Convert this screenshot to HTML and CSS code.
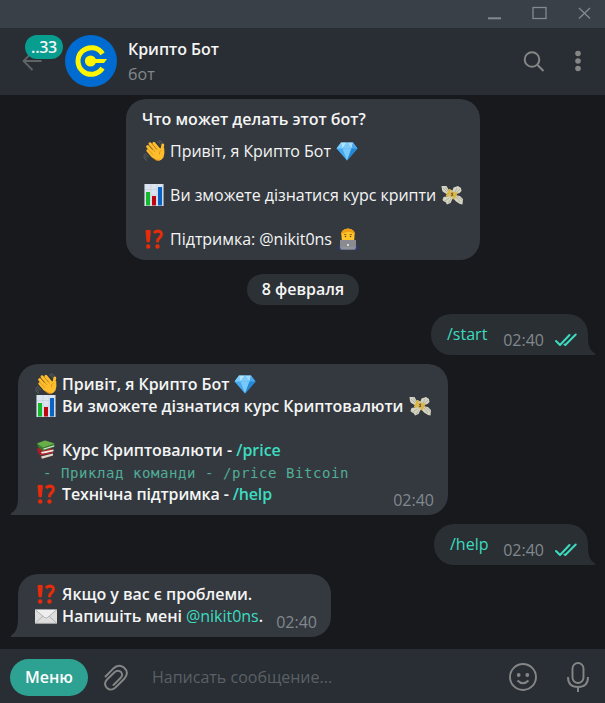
FILE: index.html
```html
<!DOCTYPE html>
<html lang="ru">
<head>
<meta charset="utf-8">
<title>Крипто Бот</title>
<link rel="stylesheet" href="styles.css">
</head>
<body>
<svg class="sprite" aria-hidden="true">
  <symbol id="wave" viewBox="0 0 22 22">
    <path d="M4.800 10.500L10 16.500M4.600 6.500L11 14M7 3.700L13 11M10.800 3.300L16 9.500M19.800 5L18.500 12" fill="none" stroke="#fdbd2d" stroke-width="2.900" stroke-linecap="round"/>
    <path d="M9 10L17 8.500L21.200 8Q22 14 20.500 17.500Q17.500 22 13 20Q10 18.500 7.500 14.500Z" fill="#fdbd2d"/>
    <path d="M4.500 8.700L10 14.800M6 5L12 12M9.200 4L14.500 10.200" fill="none" stroke="#d08719" stroke-width=".7"/>
    <path d="M18.300 10Q15.800 11.500 16.500 14.500M9.500 17.500Q12.500 21 17 20.300" fill="none" stroke="#e58e18" stroke-width=".9"/>
    <path d="M14 1.500Q17 1.800 17.500 4.800M15.800 .5Q18.500 1 19.200 3M1 14Q1.500 17 4 18.500M.5 16.500Q1.500 19.500 4 20.500M2.500 13Q3.500 16 6 17" fill="none" stroke="#62666a" stroke-width=".8"/>
  </symbol>
  <symbol id="gem" viewBox="0 0 22 22">
    <path d="M5 2.500H17L21.500 8.500L11 20.500L.5 8.500Z" fill="#46a9ef"/>
    <path d="M5 2.500L6.500 8.500H.5Z" fill="#7dcdfa"/><path d="M5 2.500H11L6.500 8.500Z" fill="#b1e4ff"/>
    <path d="M11 2.500L15.500 8.500H6.500Z" fill="#7acbfa"/><path d="M11 2.500H17L15.500 8.500Z" fill="#a0dcfe"/>
    <path d="M17 2.500L21.500 8.500H15.500Z" fill="#4ca8ea"/><path d="M6.500 8.500H15.500L11 20.500Z" fill="#79c9fb"/>
    <path d="M15.500 8.500H21.500L11 20.500Z" fill="#2488d6"/>
  </symbol>
  <symbol id="chart" viewBox="0 0 22 22">
    <path d="M1.500 0H20.500V22H1.500Z" fill="#dce5ef"/>
    <path d="M2 5.500H20M2 11H20M2 16.500H20M8 0V22M14 0V22" stroke="#c3cfde" stroke-width=".6"/>
    <path d="M1.500 0V22M20.300 0V22" stroke="#8f9caa" stroke-width=".7"/>
    <path d="M3 8H7V21.500H3Z" fill="#15b72b"/><path d="M9 12H13V21.500H9Z" fill="#bd0710"/><path d="M15 3H19V21.500H15Z" fill="#0863c5"/>
  </symbol>
  <symbol id="alarm" viewBox="0 0 22 22">
    <path d="M2.500 2.500Q5.200 1 7.900 2.500L6.900 13.500Q5.200 15.500 3.500 13.500Z" fill="#e52d0b"/>
    <circle cx="5.200" cy="18.500" r="2.200" fill="#e52d0b"/>
    <path d="M11 5Q12.500 3 15.200 3.100Q18.600 3.300 18.400 6.300Q18.200 8.500 16.300 10Q14.500 11.200 14.500 14.300" fill="none" stroke="#e52d0b" stroke-width="3.100"/>
    <circle cx="14.500" cy="18.500" r="2.200" fill="#e52d0b"/>
  </symbol>
  <symbol id="money" viewBox="0 0 22 22">
    <path d="M9 8L5.500 2L.5 2L.8 4.500Q1 8 4 9L7 11ZM11 8L12.500 3.500L17 2L20 4L20.500 7L18.500 9L14 10.500ZM8 12L2.500 13L1.500 16L3 17.500L4.500 18L6 20.500L9.500 19L12 14ZM14 11L19 12L22 15L21.500 20.500L19 20L15 17.500L12 14Z" fill="#d5d3c1"/>
    <path d="M2 4L6 8M4 3L7 7M16 4L14 8M19 5L15 9M4 17L8 14M7 19L10 15M19 18L15 13M21 16L16 12" stroke="#9c9986" stroke-width=".6"/>
    <path d="M8 5L16.500 8.500L13.500 15.500L5 12Z" fill="#cfc69b"/>
    <path d="M8 5L10 5.800L7 12.800L5 12ZM14.500 7.700L16.500 8.500L13.500 15.500L11.500 14.700Z" fill="#dfb43c"/>
    <ellipse cx="11" cy="10.300" rx="2.800" ry="2.500" fill="#dab651"/><path d="M12.300 9L10.500 9.400L11.900 11.300L10 11.800" fill="none" stroke="#59451b" stroke-width=".9"/>
  </symbol>
  <symbol id="coder" viewBox="0 0 22 22">
    <path d="M2 21.500Q2 15 7 14H15Q20 15 20 21.500Z" fill="#2a40b8"/>
    <path d="M4.500 9Q3.500 1 11 .5Q18.500 1 17.500 9L17 13H5Z" fill="#ffc52b"/>
    <path d="M4 8Q3 1 11 .5Q19 1 18 8L17 5.500Q14 3.500 10 4L5.500 5.500Z" fill="#eea014"/>
    <path d="M7 6.500H9.500M12.500 6.500H15" stroke="#855116" stroke-width=".8"/><circle cx="8.500" cy="8.500" r=".8" fill="#62400f"/><circle cx="13.500" cy="8.500" r=".8" fill="#62400f"/>
    <path d="M3 12H19V19L18 21.700H4L3 19Z" fill="#898b90"/><path d="M4 20H18" stroke="#9fa1a5" stroke-width=".8"/><circle cx="11" cy="17" r=".9" fill="#fff"/>
  </symbol>
  <symbol id="books" viewBox="0 0 22 22">
    <path d="M3 14L16 12L19 17L7 20.500L4 18.500Z" fill="#4b3833"/><path d="M6 17.500L18 14.500V16.500L7 19.700Z" fill="#ded9d1"/>
    <path d="M2 9L15 8L19 12L7 16L3 14Z" fill="#a91d29"/><path d="M6 13L18.500 10.500V12.200L7 15Z" fill="#efe9e2"/><path d="M5 15.500L18 13.500" stroke="#c62534" stroke-width="1"/>
    <path d="M2 4.500L10 1.500L19.500 4.500V8L8 12L3 8Z" fill="#377a2f"/><path d="M2 4.500L10 1.500L19.500 4.500L8 8.500Z" fill="#68ae48"/><path d="M8.500 9.500L19.200 6.300V7.500L8.500 10.800Z" fill="#deded4"/>
  </symbol>
  <symbol id="mail" viewBox="0 0 22 22">
    <path d="M0 4.500H22V18.500H0Z" fill="#dedede"/><path d="M.5 18L8 11M21.500 18L14 11" stroke="#aaa" stroke-width=".8"/>
    <path d="M.3 4.800L9.500 12.500Q11 13.500 12.500 12.500L21.700 4.800" fill="#eee" stroke="#a5a5a5" stroke-width=".8"/><path d="M.4 18.200H21.600" stroke="#b5b5b5" stroke-width=".7"/>
  </symbol>
  <symbol id="tail" viewBox="0 0 8 17"><path d="M8 0Q8 12 1 15.500Q0 16.500 1.500 17H8Z" fill="currentColor"/></symbol>
  <symbol id="checks" viewBox="0 0 22 14"><path d="M1 8L5 12L14.500 2M9.500 11.500L10.300 12L20.700 1.500" fill="none" stroke="#3ddcc0" stroke-width="2" stroke-linecap="round" stroke-linejoin="round"/></symbol>
</svg>
<div class="app">
  <div class="titlebar">
    <svg width="120" height="28" viewBox="0 0 120 28" fill="none" stroke="#858990" stroke-width="1.300"><path d="M4 18.300H17" stroke-width="2"/><rect x="49" y="7.500" width="13" height="11"/><path d="M95 8L106 18.500M106 8L95 18.500"/></svg>
  </div>
  <header class="header">
    <div class="back">
      <svg width="22" height="22" viewBox="0 0 22 22" fill="none" stroke="#606468" stroke-width="1.800"><path d="M19.500 11H2M10.500 2L1.500 11L10.500 20"/></svg>
      <span class="unread">..33</span>
    </div>
    <svg class="avatar" width="52" height="52" viewBox="0 0 52 52">
      <circle cx="26" cy="26" r="26" fill="#006bd1"/>
      <path d="M37.500 18.800A13.300 13.300 0 1 0 37.500 33.200" fill="none" stroke="#fff500" stroke-width="5"/>
      <circle cx="25.500" cy="26" r="5.600" fill="#fff500"/><path d="M28 24H42L39 28H28Z" fill="#fff500"/>
    </svg>
    <div class="peer"><div class="name">Крипто Бот</div><div class="status">бот</div></div>
    <svg class="tools" width="64" height="28" viewBox="0 0 64 28"><g fill="none" stroke="#858686" stroke-width="2"><circle cx="10" cy="12.500" r="7.300"/><path d="M15.500 18L21.500 24"/></g><g fill="#858686"><circle cx="56" cy="6.500" r="2.800"/><circle cx="56" cy="14" r="2.800"/><circle cx="56" cy="21.500" r="2.800"/></g></svg>
  </header>
  <main class="chat">
    <section class="bubble about">
      <div class="line about-title">Что может делать этот бот?</div>
      <div class="line"><svg class="emoji"><use href="#wave"/></svg> Привіт, я Крипто Бот <svg class="emoji"><use href="#gem"/></svg></div>
      <div class="line"></div>
      <div class="line"><svg class="emoji"><use href="#chart"/></svg> Ви зможете дізнатися курс крипти <svg class="emoji"><use href="#money"/></svg></div>
      <div class="line"></div>
      <div class="line"><svg class="emoji"><use href="#alarm"/></svg> Підтримка: @nikit0ns <svg class="emoji"><use href="#coder"/></svg></div>
    </section>
    <div class="date">8 февраля</div>
    <section class="bubble out start"><span class="link">/start</span><span class="time">02:40</span><svg class="checks" width="22" height="14"><use href="#checks"/></svg><svg class="tail"><use href="#tail"/></svg></section>
    <section class="bubble in welcome">
      <div class="body">
        <div class="line"><svg class="emoji"><use href="#wave"/></svg> Привіт, я Крипто Бот <svg class="emoji"><use href="#gem"/></svg></div>
        <div class="line"><svg class="emoji"><use href="#chart"/></svg> Ви зможете дізнатися курс Криптовалюти <svg class="emoji"><use href="#money"/></svg></div>
        <div class="line"></div>
        <div class="line"><svg class="emoji"><use href="#books"/></svg> Курс Криптовалюти - <span class="link">/price</span></div>
        <div class="line code"> - Приклад команди - /price Bitcoin</div>
        <div class="line tight"><svg class="emoji"><use href="#alarm"/></svg> Технічна підтримка - <span class="link">/help</span></div>
      </div>
      <span class="time">02:40</span><svg class="tail"><use href="#tail"/></svg>
    </section>
    <section class="bubble out help"><span class="link">/help</span><span class="time">02:40</span><svg class="checks" width="22" height="14"><use href="#checks"/></svg><svg class="tail"><use href="#tail"/></svg></section>
    <section class="bubble in support">
      <div class="body">
        <div class="line"><svg class="emoji"><use href="#alarm"/></svg> Якщо у вас є проблеми.</div>
        <div class="line"><svg class="emoji"><use href="#mail"/></svg> Напишіть мені <span class="link mention">@nikit0ns</span>.</div>
      </div>
      <span class="time">02:40</span><svg class="tail"><use href="#tail"/></svg>
    </section>
  </main>
  <footer class="composer">
    <button class="menu">Меню</button>
    <svg class="clip" width="26" height="28" viewBox="0 0 26 28" fill="none" stroke="#858686" stroke-width="1.900" stroke-linecap="round"><path d="M2.500 12.500L10 4.800Q15.500 -.5 21 3.500Q26.500 8.500 21.500 14.500L12.500 23.500Q8 27.500 4 24Q0 20 4 15.500L11.500 8.200Q15 5.300 18 8Q20.500 11 17.500 14L10.500 21"/></svg>
    <div class="placeholder">Написать сообщение...</div>
    <svg width="28" height="28" viewBox="0 0 28 28"><circle cx="14" cy="14" r="13" fill="none" stroke="#858686" stroke-width="1.900"/><circle cx="9.700" cy="12" r="1.900" fill="#858686"/><circle cx="18.300" cy="12" r="1.900" fill="#858686"/><path d="M8.500 17.500Q14 23 19.500 17.500" fill="none" stroke="#858686" stroke-width="1.900"/></svg>
    <svg class="mic" width="22" height="30" viewBox="0 0 22 30" fill="none" stroke="#858686" stroke-width="1.900"><rect x="5.500" y="1" width="11" height="20" rx="5.500"/><path d="M1 15Q1 25 11 25Q21 25 21 15M11 25V30"/></svg>
  </footer>
</div>
</body>
</html>
```
FILE: styles.css
```css
* { box-sizing: border-box; }
body {
  margin: 0;
  background: #18191d;
  color: #f5f5f5;
  font: 16px/22px "Open Sans", "Noto Sans", sans-serif;
}
.sprite { display: none; }
.app { display: flex; flex-direction: column; width: 605px; height: 703px; }
svg { display: block; flex: none; }

.titlebar { display: flex; justify-content: flex-end; height: 28px; padding-right: 1px; background: #3a4047; }

.header { display: flex; align-items: center; height: 67px; padding: 0 19px 1px 0; background: #282e33; }
.back { position: relative; width: 65px; padding-left: 22px; }
.unread {
  position: absolute;
  left: 25px;
  top: -15px;
  width: 38px;
  height: 24px;
  border-radius: 12px;
  background: #089e8f;
  font-weight: 600;
  font-size: 16px;
  line-height: 24px;
  letter-spacing: -0.3px;
  text-align: center;
}
.peer { flex: 1; margin-left: 11px; padding-top: 1px; }
.name { font-weight: 600; line-height: 24px; letter-spacing: -0.05px; }
.status { color: #83888b; line-height: 26px; }

.chat { display: flex; flex: 1; flex-direction: column; align-items: flex-start; gap: 9px; padding: 4px 17px 0 18px; }
.bubble { position: relative; padding: 9px 16px 10px; border-radius: 20px; background: #33393f; }
.line { height: 22px; letter-spacing: -0.04px; white-space: pre; }
.emoji { display: inline-block; width: 22px; height: 22px; margin: 0 1px; vertical-align: top; }
.about { width: 354px; margin-left: 108px; }
.about-title { margin-bottom: 10px; font-weight: 600; letter-spacing: 0; }
.date {
  width: 112px;
  height: 31px;
  margin: 5px 0 0 229px;
  border-radius: 16px;
  background: #2c3136;
  font-weight: 600;
  line-height: 30px;
  text-align: center;
}
.in { display: flex; justify-content: space-between; border-bottom-left-radius: 0; font-weight: 600; }
.in .time { align-self: flex-end; margin: 0 -2px -6px 0; }
.body { width: 0; }
.welcome { width: 430px; }
.support { width: 313px; }
.out { display: flex; align-items: center; align-self: flex-end; height: 41px; background: #2a2f33; border-bottom-right-radius: 0; }
.start { width: 157px; }
.help { width: 154px; }
.out .time { margin: 11px 11px 0 auto; }
.out .checks { margin: 11px -5px 0 0; }
.link { color: #3ddcc0; }
.mention { font-weight: 400; }
.time { color: #82888d; font-weight: 400; }
.tight { letter-spacing: -0.15px; }
.code { color: #51ad97; font: 14px/24px "DejaVu Sans Mono", monospace; letter-spacing: 0.57px; }
.tail { position: absolute; bottom: 0; width: 8px; height: 17px; }
.in .tail { left: -8px; color: #33393f; }
.out .tail { right: -8px; color: #2a2f33; transform: scaleX(-1); }

.composer { display: flex; align-items: center; height: 54px; padding: 2px 16px 0 10px; background: #282e33; }
.menu { width: 78px; height: 37px; padding: 0; border: 0; border-radius: 19px; background: #2da192; color: #fff; font: 600 16px/36px "Open Sans", sans-serif; }
.clip { margin: 2px 0 0 15px; }
.placeholder { flex: 1; margin-left: 23px; color: #5b6065; }
.mic { margin-left: 30px; }
```
